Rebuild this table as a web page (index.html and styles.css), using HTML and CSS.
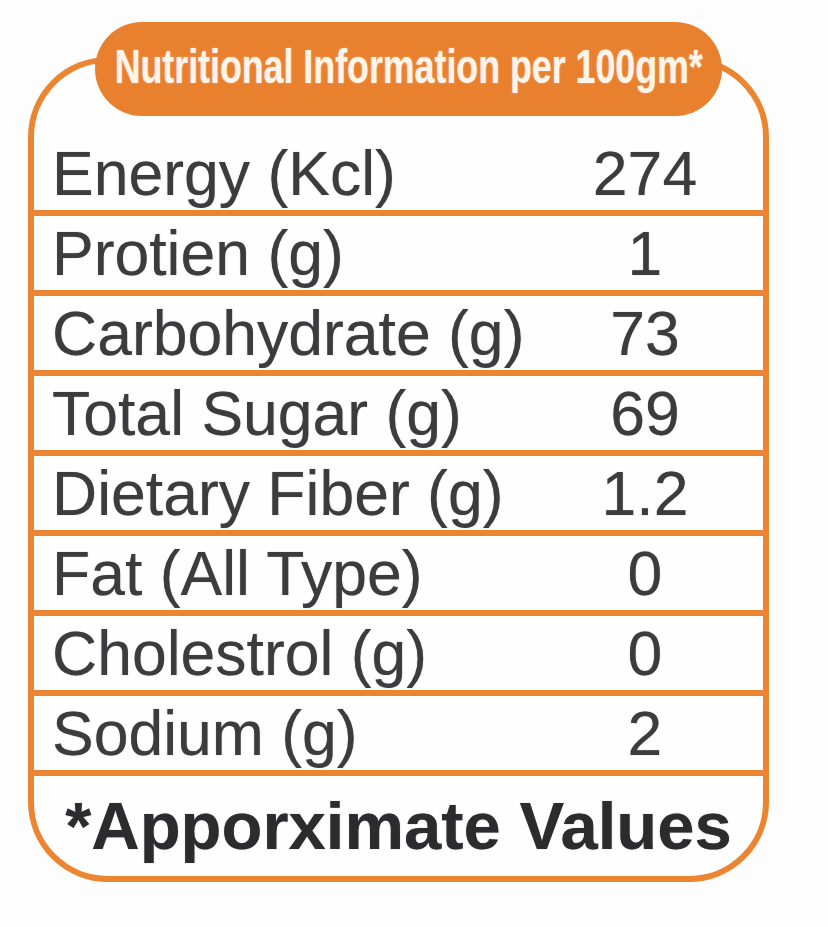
FILE: index.html
```html
<!DOCTYPE html>
<html lang="en">
<head>
<meta charset="utf-8">
<title>Nutritional Information</title>
<link rel="stylesheet" href="styles.css">
</head>
<body>
<div class="card">
  <div class="badge"><span class="badge-text">Nutritional Information per 100gm*</span></div>
  <div class="rows">
    <div class="row first"><span class="label">Energy (Kcl)</span><span class="value">274</span></div>
    <div class="row"><span class="label">Protien (g)</span><span class="value">1</span></div>
    <div class="row"><span class="label">Carbohydrate (g)</span><span class="value">73</span></div>
    <div class="row"><span class="label">Total Sugar (g)</span><span class="value">69</span></div>
    <div class="row"><span class="label">Dietary Fiber (g)</span><span class="value">1.2</span></div>
    <div class="row"><span class="label">Fat (All Type)</span><span class="value">0</span></div>
    <div class="row"><span class="label">Cholestrol (g)</span><span class="value">0</span></div>
    <div class="row"><span class="label">Sodium (g)</span><span class="value">2</span></div>
  </div>
  <div class="footer">*Apporximate Values</div>
</div>
</body>
</html>
```
FILE: styles.css
```css
html, body {
  margin: 0;
  padding: 0;
  background: #fdfdfd;
}

body {
  font-family: "Liberation Sans", Arial, sans-serif;
}

.card {
  position: relative;
  box-sizing: border-box;
  width: 741px;
  margin: 57px 0 0 28px;
  border: 6px solid #ec8532;
  border-radius: 80px;
  background: #fefefe;
  padding-top: 73px;
}

.badge {
  position: absolute;
  top: -41px;
  left: 61px;
  width: 627px;
  height: 94px;
  border-radius: 47px;
  background: #e9802e;
  display: flex;
  align-items: center;
  justify-content: center;
  overflow: hidden;
}

.badge-text {
  display: inline-block;
  white-space: nowrap;
  color: #fff4ea;
  font-size: 48px;
  font-weight: bold;
  transform: scaleX(0.745);
  margin-top: -6px;
  text-shadow: 0 0 2px rgba(255, 255, 255, 0.5);
}

.rows {
  display: flex;
  flex-direction: column;
}

.row {
  display: grid;
  grid-template-columns: 1fr 160px;
  height: 74px;
  padding: 0 38px 0 18px;
  border-bottom: 6px solid #ec8532;
  font-size: 62.5px;
  line-height: 74px;
  color: #3c3c3e;
  text-shadow: 0 0 1px rgba(60, 60, 62, 0.6);
  white-space: nowrap;
}

.value {
  text-align: center;
}

.footer {
  padding: 17px 0 18px;
  font-size: 67px;
  line-height: 65px;
  font-weight: bold;
  color: #2c2c2e;
  text-align: center;
  text-shadow: 0 0 1px rgba(44, 44, 46, 0.6);
  white-space: nowrap;
}
```
